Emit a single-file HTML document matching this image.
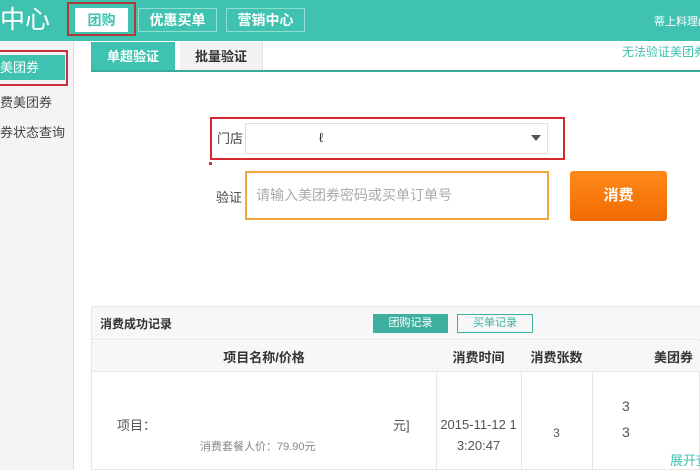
<!DOCTYPE html>
<html><head><meta charset="utf-8"><style>
*{margin:0;padding:0;box-sizing:border-box}
body{width:700px;height:470px;overflow:hidden;background:#fff;font-family:"Liberation Sans","Noto Sans CJK SC",sans-serif;position:relative;font-size:13px;color:#333}
.a{position:absolute}
</style></head><body>
<div class="a" style="left:0;top:0;width:700px;height:41px;background:#3fc2b0"></div>
<div class="a" style="left:0;top:3px;font-size:25px;color:#fff;line-height:34px">中心</div>
<div class="a" style="left:67px;top:2px;width:69px;height:34px;border:2px solid #b03a3a"></div>
<div class="a" style="left:75px;top:8px;width:53px;height:24px;background:#fff;color:#3fc2b0;font-weight:bold;text-align:center;line-height:24px;font-size:14px">团购</div>
<div class="a" style="left:138px;top:8px;width:79px;height:24px;border:1px solid #8fdcd0;color:#fff;font-weight:bold;text-align:center;line-height:22px;font-size:14px">优惠买单</div>
<div class="a" style="left:226px;top:8px;width:79px;height:24px;border:1px solid #8fdcd0;color:#fff;font-weight:bold;text-align:center;line-height:22px;font-size:14px">营销中心</div>
<div class="a" style="left:654px;top:13px;color:#fff;font-size:11px;white-space:nowrap">蒂上料理(</div>
<div class="a" style="left:0;top:41px;width:74px;height:429px;background:#f4f4f4;border-right:1px solid #e2e2e2"></div>
<div class="a" style="left:-2px;top:50px;width:70px;height:36px;border:2px solid #c8313a"></div>
<div class="a" style="left:0;top:55px;width:65px;height:25px;background:#3fc2b0;color:#fff;line-height:25px;font-size:13px">美团券</div>
<div class="a" style="left:0;top:92px;font-size:13px;color:#444">费美团券</div>
<div class="a" style="left:0;top:122px;font-size:13px;color:#444">券状态查询</div>
<div class="a" style="left:91px;top:42px;width:84px;height:29px;background:#3fc2b0;color:#fff;font-weight:bold;text-align:center;line-height:29px">单超验证</div>
<div class="a" style="left:180px;top:42px;width:83px;height:29px;background:#f2f2f2;color:#333;font-weight:bold;text-align:center;line-height:29px;border-right:1px solid #e2e2e2">批量验证</div>
<div class="a" style="left:91px;top:70px;width:609px;height:2px;background:#3aa997"></div>
<div class="a" style="left:622px;top:43px;color:#3fc2b0;font-size:12px;white-space:nowrap">无法验证美团券</div>
<div class="a" style="left:210px;top:117px;width:355px;height:43px;border:2px solid #d42a2f"></div>
<div class="a" style="left:217px;top:128px;font-size:13px;color:#444">门店</div>
<div class="a" style="left:245px;top:123px;width:303px;height:31px;border:1px solid #e0e0e0;background:#fff"></div>
<div class="a" style="left:319px;top:130px;font-size:13px">ℓ</div>
<div class="a" style="left:531px;top:135px;border-left:5px solid transparent;border-right:5px solid transparent;border-top:6px solid #555"></div>
<div class="a" style="left:209px;top:162px;width:3px;height:3px;background:#c33"></div>
<div class="a" style="left:216px;top:187px;font-size:13px;color:#444">验证</div>
<div class="a" style="left:245px;top:171px;width:304px;height:49px;border:2px solid #f0a83c;color:#aaa;font-size:14px;line-height:45px;padding-left:9px">请输入美团券密码或买单订单号</div>
<div class="a" style="left:570px;top:171px;width:97px;height:50px;background:linear-gradient(#ff8a1a,#f26b00);border-radius:3px;color:#fff;font-weight:bold;font-size:15px;text-align:center;line-height:50px">消费</div>
<div class="a" style="left:91px;top:306px;width:609px;height:164px;border:1px solid #e6e6e6;background:#fff"></div>
<div class="a" style="left:92px;top:307px;width:608px;height:33px;background:#f7f7f7;border-bottom:1px solid #e6e6e6"></div>
<div class="a" style="left:100px;top:315px;font-weight:bold;font-size:12px">消费成功记录</div>
<div class="a" style="left:373px;top:314px;width:75px;height:19px;background:#3fb0a0;color:#fff;font-size:11px;text-align:center;line-height:19px">团购记录</div>
<div class="a" style="left:457px;top:314px;width:76px;height:19px;border:1px solid #3fb0a0;color:#3fb0a0;font-size:11px;text-align:center;line-height:17px">买单记录</div>
<div class="a" style="left:92px;top:341px;width:608px;height:31px;background:#f7f7f7;border-bottom:1px solid #e6e6e6"></div>
<div class="a" style="left:92px;top:347px;width:344px;text-align:center;font-weight:bold;font-size:13px">项目名称/价格</div>
<div class="a" style="left:436px;top:347px;width:85px;text-align:center;font-weight:bold;font-size:13px">消费时间</div>
<div class="a" style="left:521px;top:347px;width:71px;text-align:center;font-weight:bold;font-size:13px">消费张数</div>
<div class="a" style="left:654px;top:347px;font-weight:bold;font-size:13px;white-space:nowrap">美团券</div>
<div class="a" style="left:436px;top:372px;width:1px;height:98px;background:#e6e6e6"></div>
<div class="a" style="left:521px;top:372px;width:1px;height:98px;background:#e6e6e6"></div>
<div class="a" style="left:592px;top:372px;width:1px;height:98px;background:#e6e6e6"></div>
<div class="a" style="left:117px;top:415px;font-size:13px;color:#555">项目：</div>
<div class="a" style="left:393px;top:415px;font-size:13px;color:#555">元]</div>
<div class="a" style="left:200px;top:438px;font-size:11px;color:#888">消费套餐人价：79.90元</div>
<div class="a" style="left:436px;top:414px;width:85px;text-align:center;font-size:13px;color:#555;line-height:21px">2015-11-12 1<br>3:20:47</div>
<div class="a" style="left:521px;top:426px;width:71px;text-align:center;font-size:12px;color:#555">3</div>
<div class="a" style="left:622px;top:398px;font-size:14px;color:#555">3</div>
<div class="a" style="left:622px;top:424px;font-size:14px;color:#555">3</div>
<div class="a" style="left:670px;top:450px;font-size:13px;color:#3fc2b0;white-space:nowrap">展开查</div>
</body></html>
